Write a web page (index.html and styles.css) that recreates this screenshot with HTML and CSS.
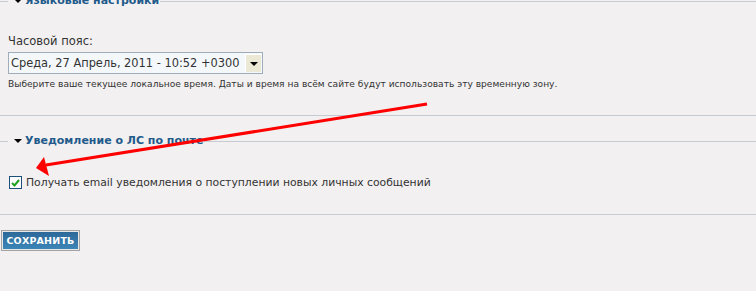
FILE: index.html
```html
<!DOCTYPE html>
<html>

<head>
    <meta charset="utf-8">
    <link rel="stylesheet" href="styles.css">
</head>

<body>
    <form class="prefs">
        <div class="section section_first">
            <fieldset class="group">
                <legend class="group_title"><span class="caret"></span>Языковые настройки</legend>
                <div class="field">
                    <label class="field_label">Часовой пояс:</label>
                    <div class="select">
                        <span class="select_value">Среда, 27 Апрель, 2011 - 10:52 +0300</span>
                        <span class="select_btn"><span class="select_arrow"></span></span>
                    </div>
                    <p class="hint">Выберите ваше текущее локальное время. Даты и время на всём сайте будут использовать эту временную зону.</p>
                </div>
            </fieldset>
        </div>

        <div class="section section_next">
            <fieldset class="group">
                <legend class="group_title"><span class="caret"></span>Уведомление о ЛС по почте</legend>
                <label class="check">
                    <span class="check_box">
                        <svg width="9" height="8" viewBox="0 0 9 8">
                            <path d="M1 4 L3.5 6.5 L8 1" fill="none" stroke="#21a121" stroke-width="2"/>
                        </svg>
                    </span>
                    Получать email уведомления о поступлении новых личных сообщений
                </label>
            </fieldset>
        </div>

        <div class="actions">
            <button type="button" class="btn_save">СОХРАНИТЬ</button>
        </div>
    </form>

    <!-- red annotation arrow drawn over the page -->
    <svg class="annotation" width="756" height="291" viewBox="0 0 756 291">
        <line x1="427" y1="104" x2="46" y2="165" stroke="#ff0000" stroke-width="3"/>
        <polygon points="36,168 44,157 49,176" fill="#ff0000"/>
    </svg>
</body>

</html>
```

FILE: styles.css
```css
body {
    margin: 0;
    background: #f2f0f1;
    font-family: 'DejaVu Sans', Verdana, sans-serif;
    color: #333;
    overflow: hidden;
}

.prefs {
    margin: 0;
}

.section {
    border-bottom: 1px solid #c6cad2;
}

.section_first {
    margin-top: -6px;
}

.section_next {
    margin-top: 18px;
}

.group {
    margin: 0;
    padding: 0 8px;
    border: 0;
    border-top: 1px solid #c6cad2;
}

.group_title {
    padding: 0 1px 0 6px;
    font-size: 11px;
    line-height: 14px;
    font-weight: bold;
    color: #1f5a8b;
    display: flex;
    align-items: center;
}

.caret {
    width: 0;
    height: 0;
    border-left: 4px solid transparent;
    border-right: 4px solid transparent;
    border-top: 4px solid #000;
    margin-right: 3px;
}

.field {
    padding: 26px 0 25px;
}

.field_label {
    display: block;
    font-size: 11.5px;
    line-height: 15px;
    margin-bottom: 3px;
}

.select {
    display: flex;
    width: 255px;
    height: 22px;
    box-sizing: border-box;
    border: 1px solid #9eadb9;
    background: #f4f8fb;
}

.select_value {
    flex: 1;
    font-size: 11.4px;
    line-height: 20px;
    padding-left: 2px;
    white-space: nowrap;
}

.select_btn {
    width: 15px;
    margin: 1px;
    background: #ebe8d6;
    border-left: 1px solid #fff;
    border-top: 1px solid #fff;
    display: flex;
    align-items: center;
    justify-content: center;
}

.select_arrow {
    width: 0;
    height: 0;
    border-left: 4px solid transparent;
    border-right: 4px solid transparent;
    border-top: 4px solid #000;
}

.hint {
    margin: 4px 0 0;
    font-size: 9.1px;
    line-height: 12px;
}

.check {
    display: flex;
    align-items: center;
    padding: 28px 0 25px 1px;
    font-size: 10.8px;
    line-height: 13px;
}

.check_box {
    width: 11px;
    height: 11px;
    border: 1px solid #1c4f7a;
    background: #fff;
    margin-right: 4px;
    display: flex;
    align-items: center;
    justify-content: center;
}

.actions {
    padding: 14px 1px;
}

.btn_save {
    font-family: 'DejaVu Sans', Verdana, sans-serif;
    font-size: 9.5px;
    font-weight: bold;
    color: #fff;
    width: 79px;
    height: 21px;
    padding: 0;
    border: 1px solid #a3a3a3;
    box-shadow: inset 0 0 0 1px #e8e8e8;
    background: linear-gradient(#2b6797, #3d87b9);
    letter-spacing: 0.2px;
}

.annotation {
    position: absolute;
    left: 0;
    top: 0;
    pointer-events: none;
}
```
